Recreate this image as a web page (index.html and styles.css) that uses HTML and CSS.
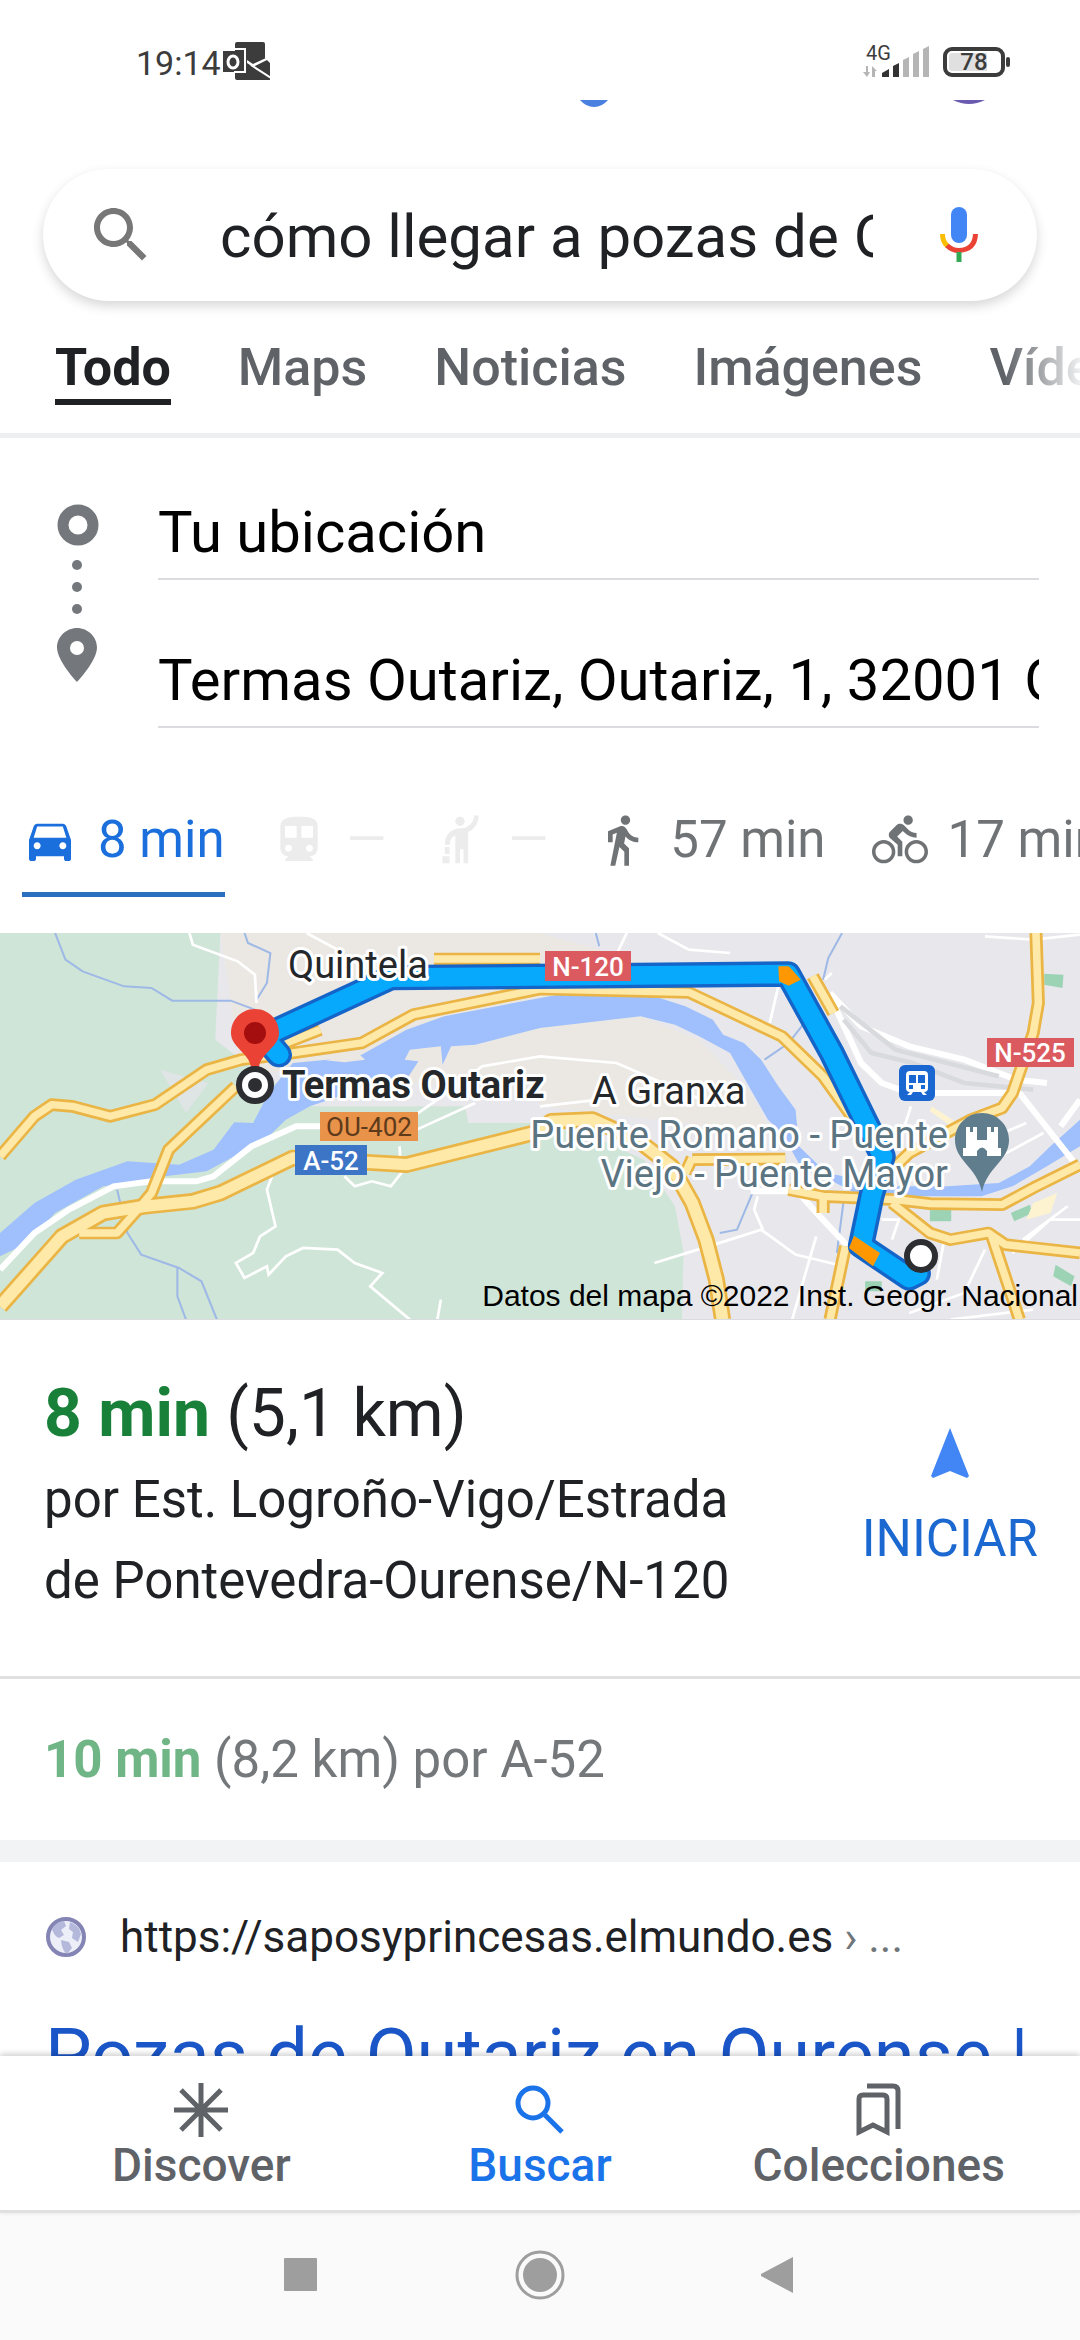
FILE: index.html
```html
<!DOCTYPE html>
<html lang="es">
<head>
    <meta charset="UTF-8">
    <meta name="viewport" content="width=device-width, initial-scale=1.0">
    <title>cómo llegar a pozas de Outariz</title>
    <link rel="stylesheet" href="styles.css">
</head>
<body>
    <div class="status">
        <div class="status-left">
            <span class="clock">19:14</span>
            <svg width="50" height="38" viewBox="0 0 50 38">
                <path fill="#3c3c3c" d="M14 2q0-2 2-2h26q2 0 2 2v14l5 5v17H16q-2 0-2-2v-6H2V9h12z"/>
                <path fill="#fff" d="M45 16h5L32 25l-6-4v-3l6 4z"/>
                <path fill="none" stroke="#fff" stroke-width="2" d="M14 7h10v12M24 19v11H13M30 23l20 13"/>
                <ellipse cx="12" cy="20" rx="5" ry="6" fill="none" stroke="#fff" stroke-width="3"/>
            </svg>
        </div>
        <div class="status-right">
            <div class="signal">
                <span class="net">4G</span>
                <svg width="66" height="32" viewBox="0 0 66 32">
                    <path fill="#b5b5b5" d="M3 20h2v6h2l-3 5-4-5h3zM9 31V20l5 5h-2v6zM40 14l6-3v20h-6zM50 8l6-3v26h-6zM60 3l6-3v31h-6z"/>
                    <path fill="#333" d="M19 27l7-4v8h-7zM30 20l6-3v14h-6z"/>
                </svg>
            </div>
            <span class="battery">78</span>
        </div>
    </div>

    <main>
        <!-- bottom edge of the scrolled logo and avatar -->
        <div class="scrolled">
            <svg width="28" height="7" viewBox="0 0 28 7"><path fill="#4a80e0" d="M0 0h28q-6 7-14 7T0 0z"/></svg>
            <svg width="32" height="4" viewBox="0 0 32 4"><path fill="#6a5bb0" d="M0 0h32q-8 4-16 4T0 0z"/></svg>
        </div>

        <form class="search">
            <svg class="search-icon" viewBox="0 0 24 24"><path d="M15.5 14h-.79l-.28-.27C15.41 12.59 16 11.11 16 9.5 16 5.91 13.09 3 9.5 3S3 5.91 3 9.5 5.91 16 9.5 16c1.61 0 3.09-.59 4.23-1.57l.27.28v.79l5 4.99L20.49 19l-4.99-5zm-6 0C7.01 14 5 11.99 5 9.5S7.01 5 9.5 5 14 7.01 14 9.5 11.99 14 9.5 14z"/></svg>
            <input type="text" aria-label="Buscar" value="cómo llegar a pozas de Outariz">
            <button type="button" class="mic" aria-label="Búsqueda por voz">
                <svg width="40" height="56" viewBox="0 0 40 56">
                    <rect x="12" y="0" width="16" height="36" rx="8" fill="#4285f4"/>
                    <path fill="none" stroke="#fbbc04" stroke-width="5" d="M3.500 27q0 8 5 12"/>
                    <path fill="none" stroke="#ea4335" stroke-width="5" d="M8 38.500q5 5 12 5 16-1 16.500-16.500"/>
                    <path fill="#34a853" d="M17.500 45h5v10h-5z"/>
                </svg>
            </button>
        </form>

        <nav class="tabs">
            <a href="#" class="active">Todo</a>
            <a href="#">Maps</a>
            <a href="#">Noticias</a>
            <a href="#">Imágenes</a>
            <a href="#">Vídeos</a>
        </nav>

        <section class="trip">
            <svg class="rail" width="60" height="204" viewBox="0 0 60 204">
                <circle cx="30" cy="39" r="15" fill="none" stroke="#74787c" stroke-width="11"/>
                <g fill="#74787c">
                    <circle cx="29" cy="79" r="5"/>
                    <circle cx="29" cy="101" r="5"/>
                    <circle cx="29" cy="123" r="5"/>
                    <path d="M29 142c-11 0-20 9-20 19.500C9 175 29 196 29 196s20-21 20-34.500C49 151 40 142 29 142zm0 27a7 7 0 1 1 0-14 7 7 0 0 1 0 14z"/>
                </g>
            </svg>
            <div class="fields">
                <input type="text" aria-label="Origen" value="Tu ubicación">
                <input type="text" aria-label="Destino" value="Termas Outariz, Outariz, 1, 32001 Ourense">
            </div>
        </section>

        <div class="modes">
            <button type="button" class="mode active">
                <svg viewBox="0 0 24 24"><path d="M18.920 6.010C18.720 5.420 18.160 5 17.500 5h-11c-.66 0-1.210.42-1.420 1.010L3 12v8c0 .55.45 1 1 1h1c.55 0 1-.45 1-1v-1h12v1c0 .55.45 1 1 1h1c.55 0 1-.45 1-1v-8l-2.080-5.990zM6.500 16c-.83 0-1.500-.67-1.500-1.500S5.670 13 6.500 13s1.500.67 1.500 1.500S7.330 16 6.500 16zm11 0c-.83 0-1.500-.67-1.500-1.500s.67-1.500 1.500-1.500 1.500.67 1.500 1.500-.67 1.500-1.500 1.500zM5 11l1.500-4.800h11L19 11H5z"/></svg>
                <span>8 min</span>
            </button>
            <button type="button" class="mode off">
                <svg viewBox="0 0 24 24"><path d="M12 2c-4 0-8 .5-8 4v9.500C4 17.430 5.570 19 7.500 19L6 20.500v.5h12v-.5L16.500 19c1.930 0 3.500-1.570 3.500-3.500V6c0-3.500-3.580-4-8-4zM7.500 17c-.83 0-1.500-.67-1.500-1.500S6.670 14 7.500 14s1.500.67 1.500 1.500S8.330 17 7.500 17zm3.500-6H6V6h5v5zm5.500 6c-.83 0-1.500-.67-1.500-1.500s.67-1.500 1.500-1.500 1.500.67 1.500 1.500-.67 1.500-1.500 1.500zm1.500-6h-5V6h5v5z"/></svg>
                <span>—</span>
            </button>
            <button type="button" class="mode off">
                <svg viewBox="0 0 24 24"><path d="M12 6c-1.100 0-2-.9-2-2s.9-2 2-2 2 .9 2 2-.9 2-2 2zm6-4.500h2c0 2.700-1.400 5.200-3 6.200-.6.400-1.200.7-1.500.8V22h-2v-6h-1.500v6H10V10.100c-.3.1-.8.3-1 .5-.8.6-1.200 1.400-1.300 3.400H5.500c0-2 .5-3.800 2.200-5.300C8.800 7.600 10.500 7 12.500 7s2.300-.5 3.100-1.100C17 5 18 3.500 18 1.500zM4.500 19h3v3h-3zM5.500 15h2v3h-2z"/></svg>
                <span>—</span>
            </button>
            <button type="button" class="mode">
                <svg viewBox="0 0 24 24"><path d="M13.500 5.500c1.100 0 2-.9 2-2s-.9-2-2-2-2 .9-2 2 .9 2 2 2zM9.800 8.900L7 23h2.100l1.800-8 2.100 2v6h2v-7.500l-2.100-2 .6-3C14.800 12 16.800 13 19 13v-2c-1.900 0-3.500-1-4.300-2.400l-1-1.600c-.4-.6-1-1-1.700-1-.3 0-.5.1-.8.1L6 8.300V13h2V9.600l1.800-.7"/></svg>
                <span>57 min</span>
            </button>
            <button type="button" class="mode">
                <svg viewBox="0 0 24 24"><path d="M15.500 5.500c1.100 0 2-.9 2-2s-.9-2-2-2-2 .9-2 2 .9 2 2 2zM5 12c-2.800 0-5 2.200-5 5s2.200 5 5 5 5-2.200 5-5-2.200-5-5-5zm0 8.500c-1.900 0-3.500-1.600-3.500-3.500s1.600-3.500 3.500-3.500 3.500 1.600 3.500 3.500-1.600 3.500-3.500 3.500zm5.800-10l2.400-2.400.8.800c1.300 1.300 3 2.100 5.100 2.100V9c-1.500 0-2.700-.6-3.600-1.500l-1.900-1.900c-.5-.4-1-.6-1.600-.6s-1.100.2-1.400.6L7.800 8.400c-.4.4-.6.9-.6 1.400 0 .6.200 1.100.6 1.400L11 14v5h2v-6.200l-2.200-2.300zM19 12c-2.800 0-5 2.200-5 5s2.200 5 5 5 5-2.200 5-5-2.200-5-5-5zm0 8.500c-1.900 0-3.500-1.600-3.500-3.500s1.600-3.500 3.500-3.500 3.500 1.600 3.500 3.500-1.600 3.500-3.500 3.500z"/></svg>
                <span>17 min</span>
            </button>
        </div>

        <svg class="map" viewBox="0 0 1080 386">
            <defs>
                <path id="roads" d="M0 710L100 590 150 555 210 560 320 590 450 555 600 450 700 420 850 400 1050 370 1200 285 1568 208 2000 218 2270 350 2390 470 2480 600M830 370L930 330M685 500L490 690 440 820 400 870 340 940 230 940M1260 118H1568M2360 170L2420 280M2010 720L2280 718M2010 715L1990 760M2290 810L2390 830 2600 840 2700 852 2910 855 3000 805 3136 735M2390 830V880M2590 850L2700 940 2760 960 2870 940 2920 975 3136 1000M2880 950L2960 1200M3008 40L3015 250 3000 340 2940 520 2910 565 2820 600 2640 700 2600 740M2455 980L2410 1200"/>
                <path id="motorway" d="M0 1160L60 1090 180 950 300 880 420 860 560 845 640 820 850 715 1180 735 1568 635 1600 605 1720 600 1850 660 1950 740 2010 850 2050 960 2080 1080 2098 1200"/>
                <path id="route" d="M810 405L765 350 1135 174 2288 163 2415 400 2510 600 2563 710 2530 830 2500 978 2640 1075 2665 1062"/>
            </defs>
            <rect width="1080" height="386" fill="#e8e8ec"/>
            <g transform="scale(.3444 .3333) translate(0 -40)">
                <path fill="#ebe8e4" d="M640 40H1568L1850 120V520H1568L700 450zM1568 320L1860 290 2030 360 2180 520 2240 640 1900 600 1568 560z"/>
                <path fill="#cfe5d8" d="M0 40H640L625 360 700 420 900 560H1350L1360 610 1568 610 1700 640 1870 720 1960 860 1985 1000 1980 1200H0z"/>
                <path fill="#dfe4e4" d="M465 450L605 490 540 580z"/>
                <path fill="#9dd3b5" d="M3032 162L3088 165 3085 205 3032 195zM2700 870H2762V905H2700zM2935 880L2990 855 2998 880 2945 905zM3065 1035L3120 1070 3110 1100 3058 1070zM2512 1085H2560V1115H2512z"/>
                <path fill="#fdf3d0" d="M2705 560L2780 610 2770 625 2700 575zM3070 820L3050 880 2980 900 3000 850z"/>
                <path fill="#9fc0fc" d="M0 940L100 850 220 780 370 725 520 735 620 690 680 608 735 610 780 520 850 430 950 420 1050 405 1180 330 1290 290 1568 235 1700 210 1900 230 1990 260 2070 300 2100 345 2160 370 2210 420 2260 500 2310 570 2320 680 2400 760 2600 800 2750 800 2900 790 2990 740 3050 680 3136 600V680L3040 740 2940 800 2850 830H2640L2500 830 2390 770 2330 750 2270 640 2230 600 2180 510 2120 400 2030 350 1960 315 1860 290 1568 325 1380 375 1310 380 1285 435 1280 380 1190 390 1175 420 1215 425 1180 480 1100 490 900 560 830 600 770 660 600 755 460 772 380 790 300 800 160 880 80 970 0 1010z"/>
                <path fill="#ebe8e4" d="M945 422L1040 400 1060 420 1000 428z"/>
                <path class="stream" d="M160 40L190 120 240 155 360 200 440 205 500 243H670L740 270M710 40L720 70 785 100 775 190 745 240M340 810L370 940 410 1005 520 1045 585 1085 630 1200M515 1045V1130L540 1200M2445 40L2405 115 2390 180M2335 310L2290 370 2220 420M2185 820L2140 930 2090 940M2450 840L2430 1000M1730 40L1740 80"/>
                <path class="lane" d="M550 40L560 75 690 125 740 165 745 250M890 40L980 90M790 770L775 810 800 920 755 950 735 1000 685 1030 710 1075 775 1040 780 1065 830 1010 880 985 980 990 1030 1030 1110 1060 1075 1100 1190 1200M1000 770L1030 800 1080 785 1135 800 1165 760 1160 680M1200 590L1270 540 1400 440 1568 410 1790 430 2080 560M1210 630L1380 550M1910 40L2000 90 2120 100M1820 40L1785 115M2260 200L2235 310M2415 160L2395 180M2860 50L3000 60 3136 45M1280 1140L1270 1200M1568 560L1740 540M1900 1030L2120 960 2210 930 2310 1005 2450 1040M2200 830L2190 870 2215 930M2370 950L2300 1200M2645 560L2620 640M2980 610L2800 690M3030 640L2850 740M2560 900L2610 900 2590 960M2740 970L2720 1080M2640 1180L2800 1120 2860 990M2970 960L3100 860M3136 900L3050 900 2940 1000M2760 1200L3000 1170"/>
                <path class="street" d="M0 1050L100 940 200 870 330 800 440 785H570L620 770 730 680 860 620 930 620M2410 220L2500 320 2640 380 2800 420 2950 480 3040 490M2415 240L2500 430 2560 490 2640 520 2800 520H2960L3136 750M2310 810L2380 890 2480 1000M2180 815H2310M3136 540L3080 620"/>
                <path fill="none" stroke="#d9dadd" stroke-width="14" d="M2450 300L2530 400 2650 430 2800 490 3000 510M2440 260L2600 390 2900 470"/>
                <use href="#roads" class="line road-edge"/>
                <use href="#motorway" class="line motorway-edge"/>
                <use href="#roads" class="line road-fill"/>
                <use href="#motorway" class="line motorway-fill"/>
                <use href="#route" class="line route-edge"/>
                <use href="#route" class="line route-fill"/>
                <path fill="#ff9800" d="M2260 140H2290L2300 150 2325 180 2290 198 2262 185zM2480 948L2555 1000 2535 1040 2465 985z"/>
            </g>

            <path fill="#ea4335" d="M255 76c-13 0-24 10-24 24 0 14 18 20 20 34h8c2-14 20-20 20-34 0-14-11-24-24-24z"/>
            <circle cx="255" cy="100" r="11" fill="#a50e0e"/>
            <circle cx="255" cy="152" r="16" fill="#fff" stroke="#2c2e31" stroke-width="6"/>
            <circle cx="255" cy="152" r="7" fill="#2c2e31"/>
            <circle cx="921" cy="323" r="14" fill="#fff" stroke="#2c2e31" stroke-width="6"/>

            <rect x="899" y="132" width="36" height="36" rx="6" fill="#1a67d2"/>
            <path fill="#fff" d="M910 138h14q4 0 4 4v13q0 4-4 4l3 3h-4l-2-3h-8l-2 3h-4l3-3q-4 0-4-4v-13q0-4 4-4z"/>
            <path fill="#1a67d2" d="M909 142h7v8h-7zM918 142h7v8h-7zM909 152h4v4h-4zM921 152h4v4h-4z"/>

            <path fill="#5f7d8c" d="M982 180c-15 0-27 12-27 27 0 21 22 27 27 52 5-25 27-31 27-52 0-15-12-27-27-27z"/>
            <path fill="#fff" d="M966 194h4v5h3v-5h4v13h10v-13h4v5h3v-5h4v21h3v8h-14v-5q-5-7-10 0v5h-14v-8h3z"/>

            <rect x="320" y="179" width="98" height="29" fill="#e8924a"/>
            <rect x="295" y="212" width="72" height="30" fill="#3c74c6"/>
            <rect x="545" y="18" width="86" height="30" fill="#da5a60"/>
            <rect x="987" y="105" width="87" height="29" fill="#da5a60"/>
            <g class="shield">
                <text x="369" y="203" class="brown">OU-402</text>
                <text x="331" y="237">A-52</text>
                <text x="588" y="43">N-120</text>
                <text x="1030" y="129">N-525</text>
            </g>
            <g class="place">
                <text x="288" y="45">Quintela</text>
                <text x="282" y="165" class="strong">Termas Outariz</text>
                <text x="592" y="171">A Granxa</text>
                <text x="948" y="215" class="poi">Puente Romano - Puente</text>
                <text x="948" y="254" class="poi">Viejo - Puente Mayor</text>
            </g>
            <text x="1078" y="373" class="credit">Datos del mapa ©2022 Inst. Geogr. Nacional</text>
        </svg>

        <section class="best">
            <div>
                <h2><b>8 min</b> (5,1 km)</h2>
                <p>por Est. Logroño-Vigo/Estrada<br>de Pontevedra-Ourense/N-120</p>
            </div>
            <button type="button" class="start">
                <svg width="38" height="51" viewBox="0 0 38 51"><path fill="#4285f4" d="M19 0L38 48l-2 2-17-7-17 7-2-2z"/></svg>
                INICIAR
            </button>
        </section>

        <p class="other"><b>10 min</b> (8,2 km) por A-52</p>

        <article class="result">
            <div class="source">
                <svg width="42" height="42" viewBox="0 0 42 42">
                    <circle cx="21" cy="21" r="18" fill="#eceef8" stroke="#8585b5" stroke-width="4"/>
                    <path fill="#b4b8da" d="M7 13q5-8 12-8l2 5-5 4 3 5-5 3q-5-2-7-9zM25 6q9 3 11 12l-3 8-6-4 1-6-4-3zM16 24l8 2 3 6-5 6q-5-3-6-14z"/>
                </svg>
                <span>https://saposyprincesas.elmundo.es <small>› ...</small></span>
            </div>
            <h3><a href="#">Pozas de Outariz en Ourense |</a></h3>
        </article>
    </main>

    <nav class="bottom">
        <a href="#">
            <svg viewBox="0 0 56 56"><path fill="none" stroke="#5f6368" stroke-width="5" d="M28 1v54M1 28h54M8 8l40 40M48 8L8 48"/></svg>
            Discover
        </a>
        <a href="#" class="active">
            <svg viewBox="0 0 56 56"><path fill="none" stroke="#1a73e8" stroke-width="5" d="M33 33L50 50"/><circle cx="21" cy="21" r="15" fill="none" stroke="#1a73e8" stroke-width="5"/></svg>
            Buscar
        </a>
        <a href="#">
            <svg viewBox="0 0 56 56"><path fill="none" stroke="#5f6368" stroke-width="5" d="M8 50V17q0-4 4-4h20q4 0 4 4v33l-14-7zM16 4h26q5 0 5 5v38"/></svg>
            Colecciones
        </a>
    </nav>
    <div class="system">
        <svg viewBox="0 0 50 50"><rect x="9" y="8" width="33" height="33" rx="1" fill="#9e9e9e"/></svg>
        <svg viewBox="0 0 50 50"><circle cx="25" cy="25" r="17" fill="#9e9e9e"/><circle cx="25" cy="25" r="23" fill="none" stroke="#9e9e9e" stroke-width="3"/></svg>
        <svg viewBox="0 0 50 50"><path fill="#9e9e9e" d="M38 7v36L6 26v-2z"/></svg>
    </div>
</body>
</html>
```

FILE: styles.css
```css
* {
    box-sizing: border-box;
    margin: 0;
    padding: 0;
}

body {
    height: 100vh;
    display: flex;
    flex-direction: column;
    background-color: #fff;
    color: #202124;
    font-family: Roboto, sans-serif;
    font-size: 51px;
    overflow: hidden;
}

svg {
    display: block;
    flex: none;
}

a {
    color: inherit;
    text-decoration: none;
}

button,
input {
    border: none;
    background: none;
    font: inherit;
    color: inherit;
}

main {
    flex: 1;
    min-height: 0;
    overflow: hidden;
}

/* status bar */
.status {
    display: flex;
    justify-content: space-between;
    padding: 42px 75px 0 136px;
    height: 100px;
    color: #3c3c3c;
}

.status-left,
.status-right {
    display: flex;
    align-items: flex-start;
}

.clock {
    font-size: 34px;
    line-height: 42px;
}

.status-right {
    gap: 14px;
}

.signal {
    position: relative;
    padding-top: 4px;
}

.net {
    position: absolute;
    left: 3px;
    top: 0;
    font-size: 20px;
    line-height: 22px;
}

.battery {
    position: relative;
    width: 62px;
    height: 30px;
    margin-top: 5px;
    border: 4px solid #3c3c3c;
    border-radius: 9px;
    background: linear-gradient(90deg, #e0e0e0 75%, #fff 75%);
    background-clip: content-box;
    padding: 2px;
    font-size: 24px;
    font-weight: 500;
    line-height: 19px;
    text-align: center;
}

.battery::after {
    content: "";
    position: absolute;
    right: -9px;
    top: 6px;
    width: 4px;
    height: 10px;
    background-color: #3c3c3c;
    border-radius: 2px;
}

.scrolled {
    display: flex;
    justify-content: space-between;
    height: 69px;
    padding: 0 95px 0 580px;
}

/* search box */
.search {
    display: flex;
    align-items: center;
    height: 132px;
    margin: 0 43px;
    padding: 0 58px 0 42px;
    border-radius: 66px;
    box-shadow: 0 5px 12px rgba(0, 0, 0, 0.16);
}

.search-icon {
    width: 72px;
    height: 72px;
    fill: #777;
}

.search input {
    flex: 1;
    min-width: 0;
    margin: 0 66px 0 63px;
    padding-top: 4px;
    font-size: 60px;
    line-height: 80px;
}

.mic {
    width: 40px;
}

/* tabs */
.tabs {
    display: flex;
    gap: 67px;
    padding: 36px 0 28px 55px;
    overflow: hidden;
    font-size: 52px;
    font-weight: 500;
    line-height: 62px;
    color: #5f6368;
    mask-image: linear-gradient(90deg, #000 93%, rgba(0, 0, 0, 0.1) 100%);
}

.tabs a {
    border-bottom: 6px solid transparent;
}

.tabs .active {
    font-weight: 700;
    color: #202124;
    border-color: #202124;
}

/* origin and destination */
.trip {
    display: flex;
    gap: 50px;
    padding: 48px 41px 78px 48px;
    border-top: 5px solid #eeeff0;
    color: #000;
}

.fields {
    flex: 1;
    display: flex;
    flex-direction: column;
    gap: 54px;
}

.fields input {
    width: 100%;
    height: 94px;
    border-bottom: 2px solid #dadce0;
    font-size: 58px;
}

/* travel modes */
.modes {
    display: flex;
    gap: 46px;
    padding: 0 0 36px 22px;
    overflow: hidden;
}

.mode {
    display: flex;
    align-items: center;
    gap: 20px;
    flex: none;
    padding-bottom: 18px;
    border-bottom: 5px solid transparent;
    line-height: 68px;
    color: #707376;
    white-space: nowrap;
}

.mode svg {
    width: 56px;
    height: 56px;
    fill: currentColor;
}

.mode.active {
    color: #1a6fdc;
    border-color: #2a6fc0;
}

.mode.off {
    color: #ececec;
}

/* map */
.map {
    width: 100%;
    border-bottom: 1px solid #dadce0;
}

.line {
    fill: none;
    stroke-linejoin: round;
}

.road-edge {
    stroke: #eab545;
    stroke-width: 38px;
}

.road-fill {
    stroke: #fee9a9;
    stroke-width: 22px;
}

.motorway-edge {
    stroke: #eab545;
    stroke-width: 50px;
}

.motorway-fill {
    stroke: #fee9a9;
    stroke-width: 34px;
}

.route-edge,
.route-fill {
    stroke-linecap: round;
}

.route-edge {
    stroke: #1565c8;
    stroke-width: 76px;
}

.route-fill {
    stroke: #06a9fc;
    stroke-width: 56px;
}

.stream {
    fill: none;
    stroke: #9fb9e6;
    stroke-width: 6px;
}

.lane {
    fill: none;
    stroke: #fff;
    stroke-width: 8px;
}

.street {
    fill: none;
    stroke: #fff;
    stroke-width: 18px;
}

.shield {
    font-size: 26px;
    font-weight: 500;
    fill: #fff;
    text-anchor: middle;
}

.shield .brown {
    fill: #5d3a1a;
    font-weight: 400;
}

.place {
    font-size: 38px;
    fill: #25282b;
    stroke: #fff;
    stroke-width: 6px;
    stroke-linejoin: round;
    paint-order: stroke;
}

.place .strong {
    font-weight: 700;
}

.place .poi {
    fill: #5b7482;
    text-anchor: end;
}

.credit {
    font-family: "Liberation Sans", Arial, sans-serif;
    font-size: 30px;
    text-anchor: end;
}

/* routes */
.best {
    display: flex;
    justify-content: space-between;
    padding: 54px 42px 55px 44px;
    border-bottom: 3px solid #e0e0e0;
}

.best h2 {
    margin-bottom: 5px;
    font-size: 66px;
    font-weight: 400;
    line-height: 80px;
}

.best h2 b {
    color: #188038;
}

.best p {
    line-height: 81px;
}

.start {
    display: flex;
    flex-direction: column;
    align-items: center;
    gap: 30px;
    padding-top: 54px;
    line-height: 60px;
    color: #1a68d0;
}

.other {
    padding: 50px 44px;
    border-bottom: 22px solid #f1f3f4;
    line-height: 61px;
    color: #75787b;
}

.other b {
    color: #70b585;
}

/* web result */
.result {
    padding: 50px 45px 0;
}

.source {
    display: flex;
    align-items: center;
    gap: 33px;
    margin-bottom: 51px;
    font-size: 44px;
    line-height: 50px;
    white-space: nowrap;
}

.source small {
    font-size: 44px;
    color: #70757a;
}

.result h3 {
    font-size: 74px;
    font-weight: 400;
    line-height: 86px;
    white-space: nowrap;
    color: #1a56c8;
}

/* app navigation */
.bottom {
    position: relative;
    display: flex;
    padding: 26px 32px 20px;
    border-bottom: 3px solid #e0e0e0;
    background-color: #fff;
    box-shadow: 0 -2px 6px rgba(0, 0, 0, 0.2);
}

.bottom a {
    flex: 1;
    display: flex;
    flex-direction: column;
    align-items: center;
    gap: 2px;
    font-size: 46px;
    font-weight: 500;
    line-height: 50px;
    color: #5f6368;
}

.bottom .active {
    color: #1a73e8;
}

.bottom svg {
    width: 56px;
    height: 56px;
}

.system {
    display: flex;
    justify-content: center;
    gap: 190px;
    padding: 37px 0 40px;
    background-color: #fafafa;
}

.system svg {
    width: 50px;
    height: 50px;
}
```
